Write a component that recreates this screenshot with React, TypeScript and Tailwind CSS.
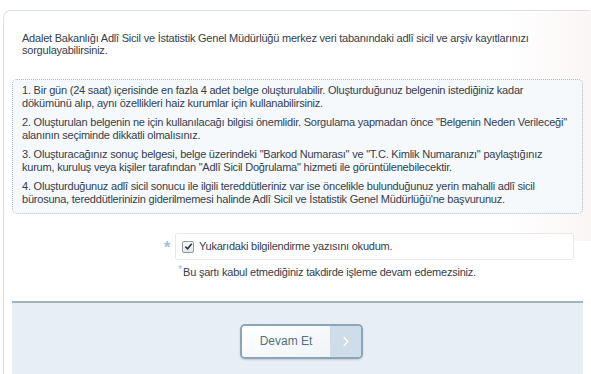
import React from 'react';

const items: [string, string][] = [
  [
    '1. Bir gün (24 saat) içerisinde en fazla 4 adet belge oluşturulabilir. Oluşturduğunuz belgenin istediğiniz kadar',
    'dökümünü alıp, aynı özellikleri haiz kurumlar için kullanabilirsiniz.',
  ],
  [
    '2. Oluşturulan belgenin ne için kullanılacağı bilgisi önemlidir. Sorgulama yapmadan önce "Belgenin Neden Verileceği"',
    'alanının seçiminde dikkatli olmalısınız.',
  ],
  [
    '3. Oluşturacağınız sonuç belgesi, belge üzerindeki "Barkod Numarası" ve "T.C. Kimlik Numaranızı" paylaştığınız',
    'kurum, kuruluş veya kişiler tarafından "Adlî Sicil Doğrulama" hizmeti ile görüntülenebilecektir.',
  ],
  [
    '4. Oluşturduğunuz adlî sicil sonucu ile ilgili tereddütleriniz var ise öncelikle bulunduğunuz yerin mahalli adlî sicil',
    "bürosuna, tereddütlerinizin giderilmemesi halinde Adlî Sicil ve İstatistik Genel Müdürlüğü'ne başvurunuz.",
  ],
];

export default function App() {
  return (
    <div
      className="w-[591px] h-[374px] overflow-hidden bg-white pt-[10px] pl-[3px] text-[11px] tracking-[-0.22px] text-[#34404c]"
      style={{ fontFamily: '"Liberation Sans", Arial, sans-serif' }}
    >
      <div className="relative h-[400px] w-[592px] rounded-tl-[8px] rounded-tr-[8px] border-l border-t border-r border-[#dbe2e7] bg-white">
        {/* faint watermark at top right */}
        <div className="absolute right-0 top-0 h-[230px] w-[90px] bg-gradient-to-l from-[#fbf5f5] to-transparent" />

        <div className="relative whitespace-nowrap px-[18px] pt-[21px] leading-[12px]">
          Adalet Bakanlığı Adlî Sicil ve İstatistik Genel Müdürlüğü merkez veri tabanındaki adlî sicil ve arşiv kayıtlarınızı
          <br />
          sorgulayabilirsiniz.
        </div>

        <div className="relative ml-[8px] mt-[23px] w-[571px] rounded-[5px] border border-dotted border-[#aeb9c2] bg-[#f6f9fb] px-[9px] pt-[4px] pb-[7px]">
          <div className="flex flex-col gap-[6px]">
            {items.map(([a, b], i) => (
              <p key={i} className="whitespace-nowrap leading-[13px]">
                {a}
                <br />
                {b}
              </p>
            ))}
          </div>
        </div>

        <div className="relative ml-[160px] mt-[19px] flex items-center gap-[5px]">
          <span className="pt-[3px] text-[16px] font-bold leading-none text-[#9dc0d8]">*</span>
          <div className="flex h-[27px] w-[399px] items-center gap-[5px] rounded-[2px] border border-[#e6eaee] bg-white px-[6px]">
            <span className="flex h-[12px] w-[12px] items-center justify-center rounded-[2px] border border-[#8c9aa6] bg-gradient-to-b from-white to-[#e3e8ec]">
              <svg viewBox="0 0 10 10" className="h-[9px] w-[9px]">
                <path d="M1.5 5.2 L4 7.6 L8.6 2" fill="none" stroke="#2c3640" strokeWidth="1.8" />
              </svg>
            </span>
            <span className="text-[11px]">Yukarıdaki bilgilendirme yazısını okudum.</span>
          </div>
        </div>

        <div className="relative ml-[174px] mt-[4px] flex items-start text-[11px]">
          <span className="mr-[1px] mt-[1px] text-[11px] leading-[8px] text-[#9dc0d8]">*</span>
          <span>Bu şartı kabul etmediğiniz takdirde işleme devam edemezsiniz.</span>
        </div>

        <div className="relative ml-[8px] mt-[20px] h-[100px] w-[571px] border-t-2 border-[#9fb3c2] bg-[#e7eef4] pt-[21px]">
          <div className="flex justify-center pl-[8px]">
            <button className="flex h-[35px] w-[123px] overflow-hidden rounded-[5px] border-2 border-[#8aa5ba] shadow-[0_1px_2px_rgba(0,0,0,0.15)]">
              <span className="flex flex-1 items-center justify-center bg-gradient-to-br from-white to-[#eef4f8] text-[12px] tracking-normal text-[#56707f]">
                Devam Et
              </span>
              <span className="flex w-[31px] items-center justify-center bg-[#cfdde8]">
                <svg viewBox="0 0 10 14" className="h-[13px] w-[9px]">
                  <path d="M3 2 L7.5 7 L3 12" fill="none" stroke="#ffffff" strokeWidth="1.6" />
                </svg>
              </span>
            </button>
          </div>
        </div>
      </div>
    </div>
  );
}
